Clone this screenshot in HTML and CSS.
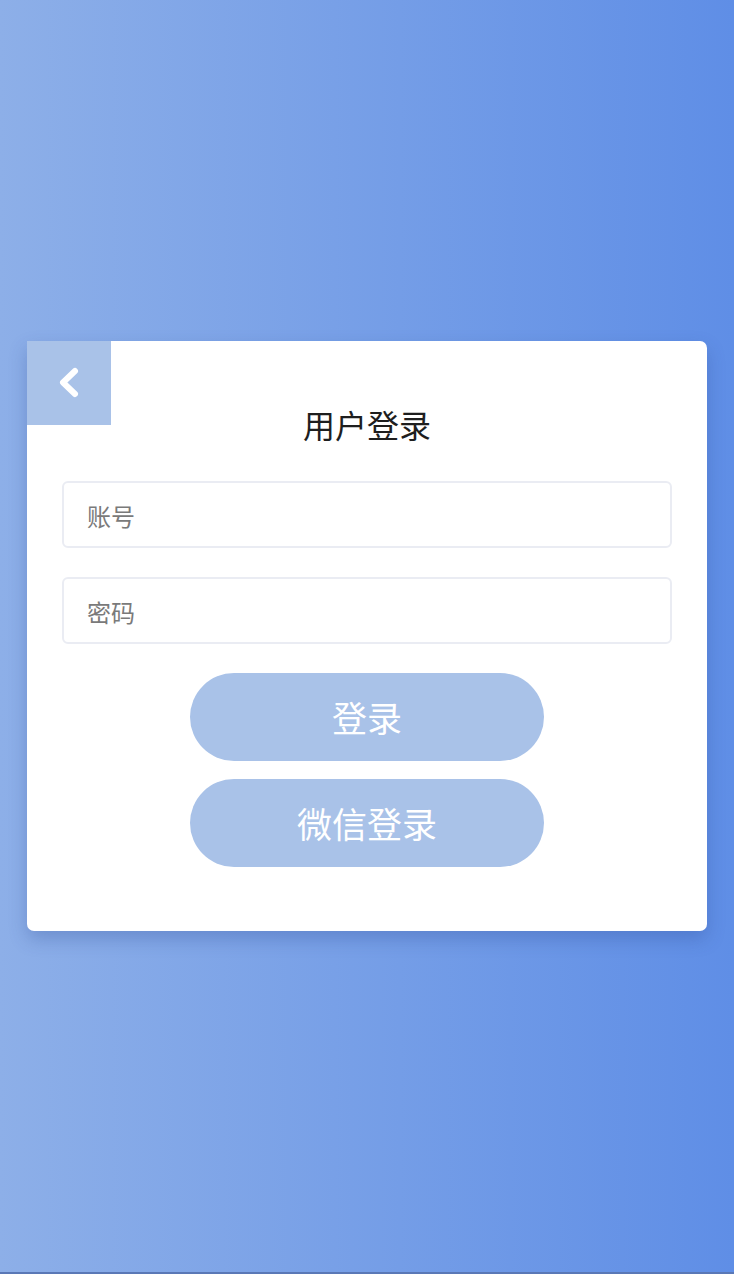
FILE: index.html
```html
<!DOCTYPE html>
<html lang="zh-CN">
<head>
<meta charset="utf-8">
<title>用户登录</title>
<link rel="stylesheet" href="styles.css">
</head>
<body>
<div class="page">
  <div class="card">
    <a class="back" href="#">
      <svg width="84" height="84" viewBox="0 0 84 84"><path d="M48 30 L36 41.5 L48 53" fill="none" stroke="#fff" stroke-width="6" stroke-linecap="round" stroke-linejoin="round"/></svg>
    </a>
    <h1 class="title">用户登录</h1>
    <div class="field"><input class="input" type="text" placeholder="账号"></div>
    <div class="field"><input class="input" type="password" placeholder="密码"></div>
    <div class="actions">
      <button class="btn">登录</button>
      <button class="btn">微信登录</button>
    </div>
  </div>
</div>
</body>
</html>
```
FILE: styles.css
```css
html, body {
  margin: 0;
  padding: 0;
  background: #ffffff;
}
body {
  font-family: "Noto Sans CJK SC", "Noto Sans", sans-serif;
}
.page {
  height: 1272px;
  border-bottom: 2px solid #5a78b6;
  background: linear-gradient(to right, #8dafe8, #5f8ee6);
  display: flex;
  align-items: center;
  justify-content: center;
}
.card {
  position: relative;
  width: 610px;
  padding: 63px 35px 64px;
  background: #ffffff;
  border-radius: 0 7px 7px 7px;
  box-shadow: 0 8px 18px rgba(40, 70, 140, 0.28);
}
.back {
  position: absolute;
  left: 0;
  top: 0;
  width: 84px;
  height: 84px;
  background: #a9c2e8;
  display: block;
}
.back svg {
  display: block;
}
.title {
  margin: 0 0 37px;
  font-size: 32px;
  line-height: 40px;
  font-weight: 400;
  color: #1e1e1e;
  text-align: center;
}
.field {
  margin-bottom: 29px;
}
.input {
  box-sizing: border-box;
  width: 100%;
  height: 67px;
  border: 2px solid #eaecf3;
  border-radius: 6px;
  padding: 2px 23px 0;
  font-family: "Noto Sans CJK SC", "Noto Sans", sans-serif;
  font-size: 24px;
  color: #333;
  outline: none;
  background: #fff;
}
.input::placeholder {
  color: #7a7a7a;
}
.actions {
  display: flex;
  flex-direction: column;
  align-items: center;
  gap: 18px;
}
.btn {
  width: 354px;
  height: 88px;
  border: none;
  border-radius: 44px;
  background: #a9c2e8;
  color: #ffffff;
  font-family: "Noto Sans CJK SC", "Noto Sans", sans-serif;
  font-size: 35px;
  line-height: 88px;
  padding: 0;
}
```
